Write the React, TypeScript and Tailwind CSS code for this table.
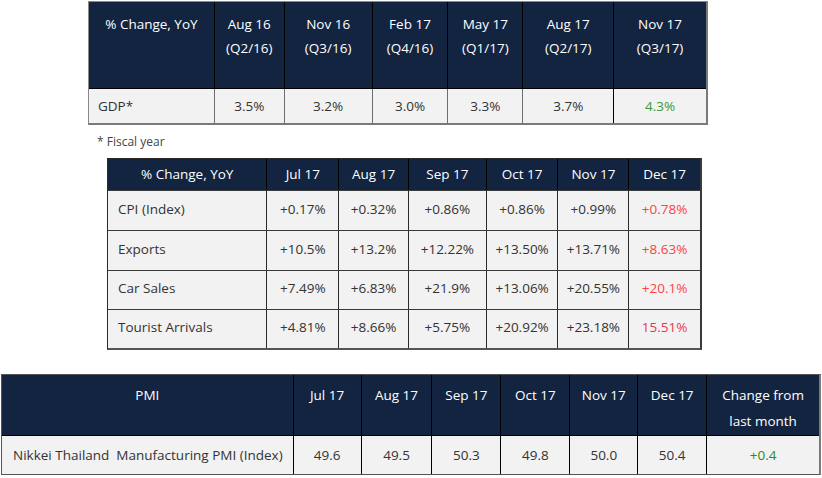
const font = { fontFamily: '"Open Sans", "DejaVu Sans", sans-serif' };

type Cell = { text: string; color?: string };

const gdpCols = [126, 70, 88, 76, 75, 91, 92];
const gdpHead = [
  ["% Change, YoY"],
  ["Aug 16", "(Q2/16)"],
  ["Nov 16", "(Q3/16)"],
  ["Feb 17", "(Q4/16)"],
  ["May 17", "(Q1/17)"],
  ["Aug 17", "(Q2/17)"],
  ["Nov 17", "(Q3/17)"],
];
const gdpRow: Cell[] = [
  { text: "GDP*" },
  { text: "3.5%" },
  { text: "3.2%" },
  { text: "3.0%" },
  { text: "3.3%" },
  { text: "3.7%" },
  { text: "4.3%", color: "text-[#3a9a3a]" },
];

const monthCols = [160, 72, 70, 78, 72, 71, 71];
const monthHead = ["% Change, YoY", "Jul 17", "Aug 17", "Sep 17", "Oct 17", "Nov 17", "Dec 17"];
const monthRows: Cell[][] = [
  ["CPI (Index)", "+0.17%", "+0.32%", "+0.86%", "+0.86%", "+0.99%", "+0.78%"],
  ["Exports", "+10.5%", "+13.2%", "+12.22%", "+13.50%", "+13.71%", "+8.63%"],
  ["Car Sales", "+7.49%", "+6.83%", "+21.9%", "+13.06%", "+20.55%", "+20.1%"],
  ["Tourist Arrivals", "+4.81%", "+8.66%", "+5.75%", "+20.92%", "+23.18%", "15.51%"],
].map((r, ri) =>
  r.map((t, i) => ({
    text: t,
    color: i === 6 ? (ri === 3 ? "text-[#ee3550]" : "text-[#ff4242]") : undefined,
  }))
);

const pmiCols = [292, 68, 71, 69, 69, 68, 69, 112];
const pmiHead = [
  ["PMI"],
  ["Jul 17"],
  ["Aug 17"],
  ["Sep 17"],
  ["Oct 17"],
  ["Nov 17"],
  ["Dec 17"],
  ["Change from", "last month"],
];
const pmiRow: Cell[] = [
  { text: "Nikkei Thailand  Manufacturing PMI (Index)" },
  { text: "49.6" },
  { text: "49.5" },
  { text: "50.3" },
  { text: "49.8" },
  { text: "50.0" },
  { text: "50.4" },
  { text: "+0.4", color: "text-[#1f8f1f]" },
];

export default function App() {
  return (
    <div className="w-[822px] h-[478px] bg-white text-[13.5px] overflow-hidden" style={font}>
      {/* --- GDP ----------------------------------------------------------- */}
      <div className="ml-[88px] mt-[1px] w-[620px] border-l border-t border-[#8a8a8a] border-r-2 border-b-2 border-r-[#7a7a7a] border-b-[#7a7a7a]">
        <div className="flex bg-[#12243f] text-white">
          {gdpHead.map((h, i) => (
            <div
              key={i}
              style={{ width: gdpCols[i] }}
              className={`h-[86px] pt-[10px] leading-[24px] text-center ${i < 6 ? "border-r border-black" : ""}`}
            >
              {h.map((l) => (
                <div key={l}>{l}</div>
              ))}
            </div>
          ))}
        </div>
        <div className="flex bg-[#f2f2f2] border-t border-black">
          {gdpRow.map((c, i) => (
            <div
              key={i}
              style={{ width: gdpCols[i] }}
              className={`h-[34px] flex items-center ${i === 0 ? "pl-[9px]" : "justify-center"} ${
                i < 6 ? (i === 5 ? "border-r border-black" : "border-r border-[#6e6e6e]") : ""
              } ${c.color ?? "text-[#333333]"}`}
            >
              {c.text}
            </div>
          ))}
        </div>
      </div>

      <div className="ml-[97px] mt-[7px] h-[20px] leading-[20px] text-[12px] text-[#444444]">* Fiscal year</div>

      {/* --- Monthly indicators ------------------------------------------- */}
      <div className="ml-[107px] mt-[6px] w-[595px] border border-[#2a2a2a] border-r-2 border-b-2 border-r-[#3a3a3a] border-b-[#555555]">
        <div className="flex bg-[#12243f] text-white">
          {monthHead.map((h, i) => (
            <div
              key={i}
              style={{ width: monthCols[i] }}
              className={`h-[31px] flex items-center justify-center ${i < 6 ? "border-r border-black" : ""}`}
            >
              {h}
            </div>
          ))}
        </div>
        {monthRows.map((row, ri) => (
          <div key={ri} className="flex bg-[#f2f2f2] border-t border-[#3a3a3a]">
            {row.map((c, i) => (
              <div
                key={i}
                style={{ width: monthCols[i] }}
                className={`${ri < 2 ? "h-[39px]" : "h-[38px]"} flex items-center pb-[3px] ${
                  i === 0 ? "pl-[10px]" : "justify-center"
                } ${i < 6 ? "border-r border-[#2a2a2a]" : ""} ${c.color ?? "text-[#333333]"}`}
              >
                {c.text}
              </div>
            ))}
          </div>
        ))}
      </div>

      {/* --- PMI ---------------------------------------------------------- */}
      <div className="ml-[1px] mt-[24px] w-[820px] border-l border-t border-[#555555] border-r-2 border-b border-r-[#7a7a7a] border-b-[#555555]">
        <div className="flex bg-[#12243f] text-white">
          {pmiHead.map((h, i) => (
            <div
              key={i}
              style={{ width: pmiCols[i] }}
              className={`h-[60px] pt-[7px] leading-[26px] text-center ${i < 7 ? "border-r border-black" : ""}`}
            >
              {h.map((l) => (
                <div key={l}>{l}</div>
              ))}
            </div>
          ))}
        </div>
        <div className="flex bg-[#f2f2f2] border-t border-black">
          {pmiRow.map((c, i) => (
            <div
              key={i}
              style={{ width: pmiCols[i] }}
              className={`h-[38px] flex items-center whitespace-pre ${i === 0 ? "pl-[11px]" : "justify-center"} ${
                i < 7 ? "border-r border-black" : ""
              } ${c.color ?? "text-[#333333]"}`}
            >
              {c.text}
            </div>
          ))}
        </div>
      </div>
    </div>
  );
}
